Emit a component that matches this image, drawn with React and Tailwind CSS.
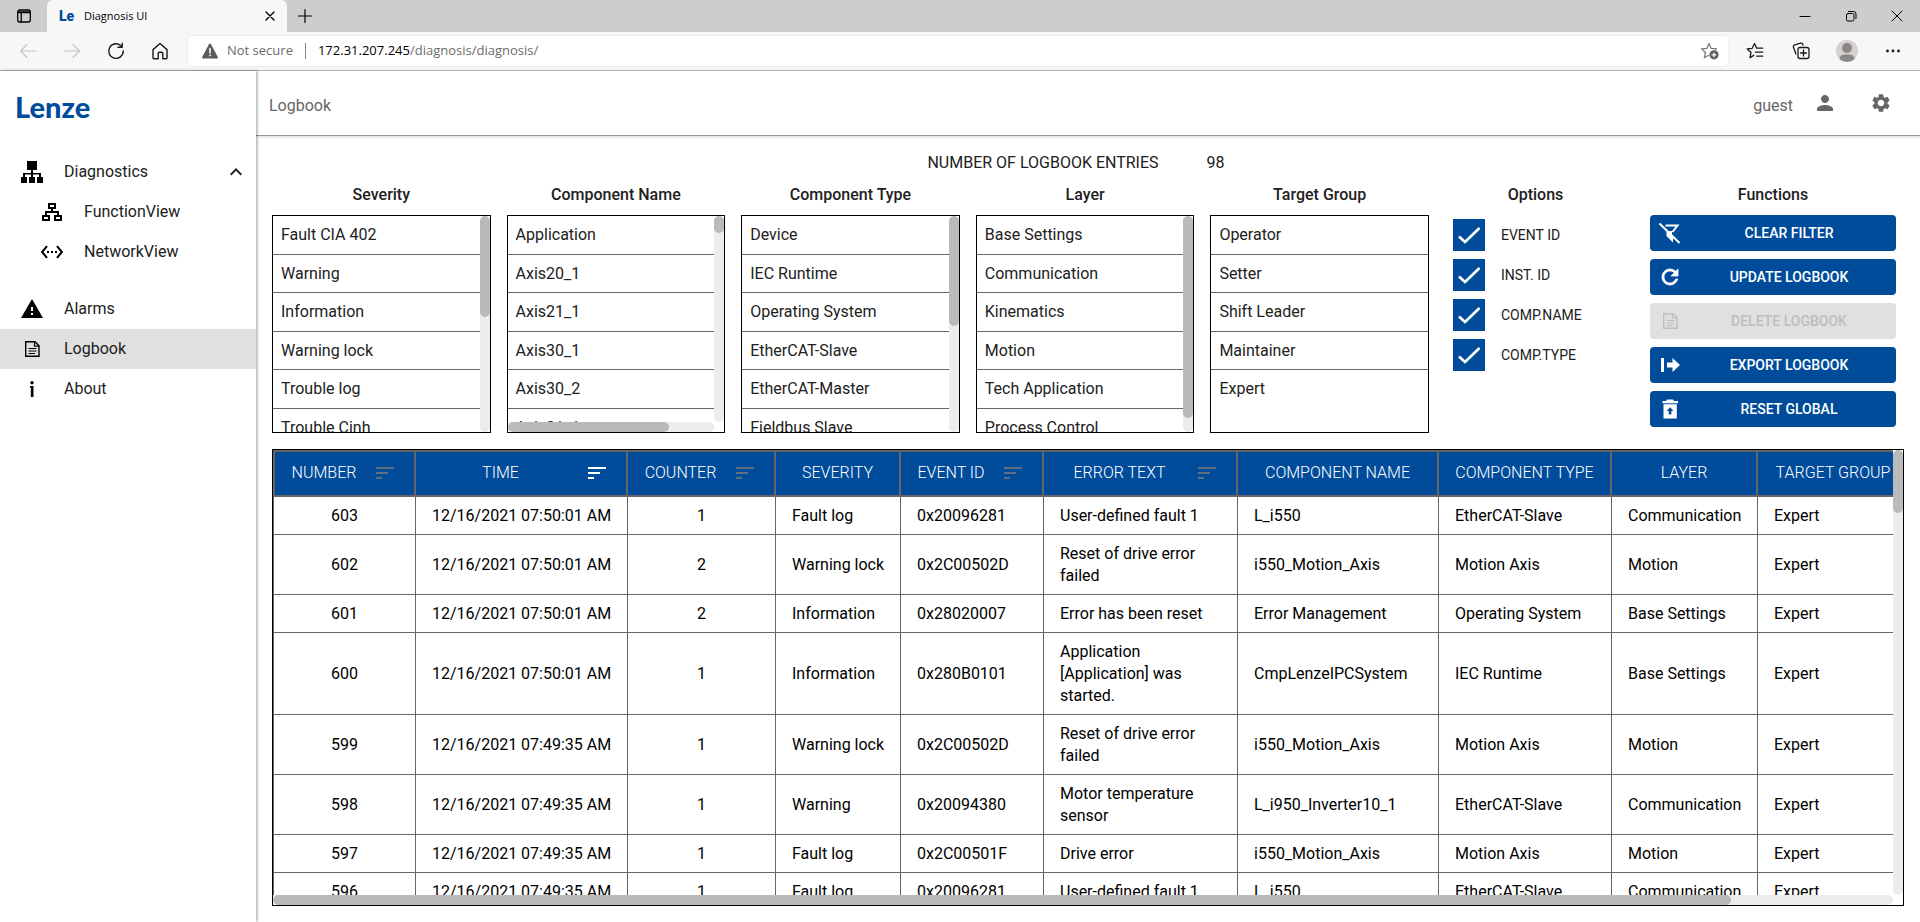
import React from "react";
import {
  MdExpandLess,
  MdPerson,
  MdSettings,
  MdSettingsEthernet,
  MdSort,
  MdWarning,
} from "react-icons/md";

/* ---------- icons ---------- */

function Stroke({ size = 16, width = 1, children, className }) {
  return (
    <svg
      width={size}
      height={size}
      viewBox={`0 0 ${size} ${size}`}
      fill="none"
      stroke="currentColor"
      strokeWidth={width}
      strokeLinecap="round"
      strokeLinejoin="round"
      className={className}
      aria-hidden="true"
    >
      {children}
    </svg>
  );
}

const TabActionsIcon = () => (
  <Stroke size={16} width={1.3}>
    <rect x="1.7" y="2" width="12.6" height="12" rx="2" />
    <path d="M2 3.8h12M2 4.6h12M5.2 5v9" />
  </Stroke>
);
const BackIcon = () => (
  <Stroke size={18} width={1.1}>
    <path d="M17 9H1.5M8 2.5 1.5 9 8 15.5" />
  </Stroke>
);
const ForwardIcon = () => (
  <Stroke size={18} width={1.1}>
    <path d="M1 9h15.500M10 2.5 16.500 9 10 15.500" />
  </Stroke>
);
const ReloadIcon = () => (
  <Stroke size={18} width={1.4}>
    <path d="M16.300 9a7.300 7.300 0 1 1-2-5M15.200 1.200v4h-4.200" />
  </Stroke>
);
const HomeIcon = () => (
  <Stroke size={18} width={1.4}>
    <path d="M2 7.600 9 1.500l7 6.100V16a.700.700 0 0 1-.7.7h-3.500V11.500a1.200 1.200 0 0 0-1.200-1.200H8.400a1.200 1.200 0 0 0-1.200 1.200v5.200H2.700A.7.7 0 0 1 2 16z" />
  </Stroke>
);
const AlertIcon = () => (
  <svg width="18" height="18" viewBox="0 0 18 18" fill="#5c5c5c" aria-hidden="true">
    <path d="M9 1.500c.4 0 .7.200.9.600l6.900 12.800c.4.700-.1 1.600-.9 1.600H2.100c-.8 0-1.300-.9-.9-1.600L8.100 2.100c.2-.4.500-.6.900-.6z" />
    <path d="M9 6.500v4.500" stroke="#fff" strokeWidth="1.500" strokeLinecap="round" />
    <circle cx="9" cy="13.400" r=".9" fill="#fff" />
  </svg>
);
const StarAddIcon = () => (
  <svg width="20" height="18" viewBox="0 0 20 18" aria-hidden="true">
    <path
      d="M9 1.500l2.200 4.900 5.300.5-4 3.600 1.200 5.200L9 13l-4.700 2.700 1.200-5.200-4-3.600 5.300-.5z"
      fill="none"
      stroke="#767676"
      strokeWidth="1.200"
      strokeLinejoin="round"
    />
    <circle cx="14" cy="12.800" r="5.400" fill="#fff" />
    <circle cx="14" cy="12.800" r="4.600" fill="#5f5f5f" />
    <path d="M11.600 12.800h4.800M14 10.400v4.800" stroke="#fff" strokeWidth="1.200" />
  </svg>
);
const FavoritesIcon = () => (
  <Stroke size={18} width={1.3}>
    <path d="M10.700 6.200 8.500 1.500 6.200 6.300 1.200 6.900l3.800 3.500-1 5.200 3.800-2.200M10.700 6.200h6M9.500 10.200h7.200M10.700 14.200h6" />
  </Stroke>
);
const CollectionsIcon = () => (
  <Stroke size={18} width={1.3}>
    <path d="M4 12 1.500 5.400A2 2 0 0 1 2.700 2.800L8.500 1.200a2 2 0 0 1 2.300 1l.3.800" />
    <rect x="6" y="5.500" width="11" height="11" rx="2" />
    <path d="M11.500 8v6M8.500 11h6" />
  </Stroke>
);
const AvatarIcon = () => (
  <svg width="22" height="22" viewBox="0 0 22 22" aria-hidden="true">
    <circle cx="11" cy="11" r="11" fill="#d3d1cf" />
    <circle cx="11" cy="8" r="5" fill="#8a8683" />
    <path d="M3.500 19c0-3.200 2.500-4.500 7.500-4.500s7.500 1.300 7.500 4.500A11 11 0 0 1 11 22a11 11 0 0 1-7.500-3z" fill="#8a8683" />
  </svg>
);
const DotsIcon = () => (
  <svg width="16" height="16" viewBox="0 0 16 16" fill="#1a1a1a" aria-hidden="true">
    <circle cx="2.500" cy="8" r="1.400" />
    <circle cx="8" cy="8" r="1.400" />
    <circle cx="13.500" cy="8" r="1.400" />
  </svg>
);

const SitemapIcon = () => (
  <svg width="22" height="22" viewBox="0 0 22 22" fill="#000" aria-hidden="true">
    <path d="M6 0h10v9H6zM10 9h2v3h-2zM2 12h18v4h-2v-2.500h-6V16h-2v-2.500H4V16H2zM0 16h6v6H0zM8 16h6v6H8zM16 16h6v6h-6z" />
  </svg>
);
const FunctionTreeIcon = () => (
  <svg width="20" height="18" viewBox="0 0 20 18" fill="none" stroke="#000" strokeWidth="2" aria-hidden="true">
    <path d="M7 1h6v4H7zM1 13h6v4H1zM13 13h6v4h-6zM10 5v4M4 13V9h12v4" />
  </svg>
);
const DocumentIcon = ({ className }) => (
  <svg width="24" height="24" viewBox="0 0 24 24" fill="none" stroke="currentColor" className={className} aria-hidden="true">
    <path d="M5.700 4.700h9.300l4 4v10.600H5.700z" strokeWidth="1.400" />
    <path d="M14.500 4.500v4.700h4.700" strokeWidth="1.200" />
    <path d="M8.500 11.500h8M8.500 14h8M8.500 16.500h6.500" strokeWidth="1.200" />
  </svg>
);
const InfoIcon = () => (
  <svg width="24" height="24" viewBox="0 0 24 24" fill="#000" aria-hidden="true">
    <circle cx="12" cy="5.700" r="1.700" />
    <path d="M10 9h3.500v11h-2.700v-9.500H10z" />
  </svg>
);
const FilterOffIcon = () => (
  <svg width="24" height="24" viewBox="0 0 24 24" fill="none" aria-hidden="true">
    <path d="M7.500 4.500h12l-5 6.500M9.500 10.500v4l4.500 4.500v-4" stroke="#fff" strokeWidth="2" />
    <path d="M9 10h5v7l-4.500-2.500z" fill="#fff" />
    <path d="M1.500 2.500l20 19.500" stroke="#fff" strokeWidth="2" />
  </svg>
);
const RefreshIcon = () => (
  <svg width="24" height="24" viewBox="0 0 24 24" fill="#fff" stroke="#fff" strokeWidth=".8" aria-hidden="true">
    <path d="M17.650 6.350C16.200 4.900 14.210 4 12 4c-4.420 0-7.990 3.580-7.990 8s3.570 8 7.990 8c3.730 0 6.840-2.550 7.730-6h-2.080c-.82 2.330-3.040 4-5.650 4-3.310 0-6-2.690-6-6s2.690-6 6-6c1.660 0 3.140.69 4.220 1.780L13 11h7V4l-2.350 2.350z" />
  </svg>
);
const ExportIcon = () => (
  <svg width="24" height="24" viewBox="0 0 24 24" fill="#fff" aria-hidden="true">
    <path d="M3 5h3v14H3zM9 9.500h5.500V5l7.500 7-7.500 7v-4.500H9z" />
  </svg>
);
const RestoreIcon = () => (
  <svg width="24" height="24" viewBox="0 0 24 24" fill="#fff" aria-hidden="true">
    <path d="M9 2.500h6l1 1.500h4v2.200H4.500V4H8z" />
    <path fillRule="evenodd" d="M5.500 7.200h13.300v14.300H5.500zM12.100 10.300l-3.400 3.700h2.100v3.500h2.600V14h2.100z" />
  </svg>
);

/* ---------- browser frame ---------- */

function BrowserFrame() {
  return (
    <div className="shrink-0 font-['Open_Sans','Noto_Sans',sans-serif]">
      <div className="flex h-8 bg-[#cdcdcd] text-black">
        <button aria-label="Tab actions" className="flex w-[47px] items-center justify-center">
          <TabActionsIcon />
        </button>
        <div className="flex w-60 items-center rounded-t-md bg-[#f7f7f7] pl-3 pr-[7px]">
          <span className="w-[25px] font-['Roboto',sans-serif] text-sm font-black text-[#004c9b]" aria-hidden="true">Le</span>
          <span className="flex-1 text-[11px]">Diagnosis UI</span>
          <button aria-label="Close tab" className="flex h-5 w-5 items-center justify-center">
            <Stroke size={10} width={1.4}><path d="M1 1l8 8M9 1 1 9" /></Stroke>
          </button>
        </div>
        <button aria-label="New tab" className="flex w-9 items-center justify-center">
          <Stroke size={16} width={1.2}><path d="M8 1.500v13M1.500 8h13" /></Stroke>
        </button>
        <div className="ml-auto flex">
          <button aria-label="Minimize" className="flex w-[46px] items-center justify-center">
            <Stroke size={12}><path d="M1 6.500h10" /></Stroke>
          </button>
          <button aria-label="Restore" className="flex w-[46px] items-center justify-center">
            <Stroke size={12}>
              <rect x="1.500" y="3.500" width="7.500" height="7.500" rx="1.500" />
              <path d="M3.500 1.500h5a2.500 2.500 0 0 1 2.500 2.500v4.500" />
            </Stroke>
          </button>
          <button aria-label="Close window" className="flex w-[46px] items-center justify-center">
            <Stroke size={12}><path d="M1 1l10 10M11 1 1 11" /></Stroke>
          </button>
        </div>
      </div>

      <div className="flex h-[39px] items-center border-b border-[#b9b9b9] bg-[#f7f7f7] pl-1.5 pr-1 text-[#1a1a1a]">
        <button aria-label="Back" className="flex w-11 justify-center text-[#c4c4c4]"><BackIcon /></button>
        <button aria-label="Forward" className="flex w-11 justify-center text-[#c4c4c4]"><ForwardIcon /></button>
        <button aria-label="Reload" className="flex w-11 justify-center"><ReloadIcon /></button>
        <button aria-label="Home" className="flex w-11 justify-center"><HomeIcon /></button>
        <div className="ml-1.5 flex h-[30px] flex-1 items-center rounded bg-white pl-[13px] pr-2 text-[13px] shadow-[0_0_2px_rgba(0,0,0,0.12)]">
          <AlertIcon />
          <span className="pl-2 text-[#6b6b6b]">Not secure</span>
          <span className="mx-3 h-4 w-px bg-[#8a8a8a]" />
          <span className="flex-1 text-[#6b6b6b]">
            <span className="text-black">172.31.207.245</span>/diagnosis/diagnosis/
          </span>
          <button aria-label="Add to favorites"><StarAddIcon /></button>
        </div>
        <div className="ml-1 flex">
          <button aria-label="Favorites" className="flex w-[46px] items-center justify-center"><FavoritesIcon /></button>
          <button aria-label="Collections" className="flex w-[46px] items-center justify-center"><CollectionsIcon /></button>
          <button aria-label="Profile" className="flex w-[46px] items-center justify-center"><AvatarIcon /></button>
          <button aria-label="Settings and more" className="flex w-[46px] items-center justify-center"><DotsIcon /></button>
        </div>
      </div>
    </div>
  );
}

/* ---------- sidebar ---------- */

function NavItem({ icon, label, sub, active, trailing }) {
  return (
    <a
      href="#"
      aria-current={active ? "page" : undefined}
      className={`flex h-10 items-center pr-2 ${sub ? "pl-9" : "pl-4"} ${active ? "bg-[#e0e0e0]" : ""}`}
    >
      <span className="flex w-12 shrink-0 items-center pl-1">
        <span className="flex w-6 justify-center text-black">{icon}</span>
      </span>
      <span className="flex-1">{label}</span>
      {trailing}
    </a>
  );
}

function Sidebar() {
  return (
    <aside className="z-10 w-64 shrink-0 bg-white shadow-[1px_0_3px_rgba(0,0,0,0.4)]">
      <div className="flex h-[81px] items-center pb-2.5 pl-[15px]">
        <a href="#" className="font-['Lato',sans-serif] text-[29px] leading-none font-black text-[#004c9b]">
          Lenze
        </a>
      </div>
      <nav>
        <NavItem icon={<SitemapIcon />} label="Diagnostics" trailing={<MdExpandLess size={24} />} />
        <NavItem sub icon={<FunctionTreeIcon />} label="FunctionView" />
        <NavItem sub icon={<MdSettingsEthernet size={24} />} label="NetworkView" />
        <div className="h-[17px]" />
        <NavItem icon={<MdWarning size={24} />} label="Alarms" />
        <NavItem icon={<DocumentIcon />} label="Logbook" active />
        <NavItem icon={<InfoIcon />} label="About" />
      </nav>
    </aside>
  );
}

/* ---------- filter lists ---------- */

const FILTERS = [
  { title: "Severity", thumb: 101, items: ["Fault CIA 402", "Warning", "Information", "Warning lock", "Trouble log", "Trouble Cinh"] },
  { title: "Component Name", thumb: 17, horizontal: true, items: ["Application", "Axis20_1", "Axis21_1", "Axis30_1", "Axis30_2", "Axis31_1"] },
  { title: "Component Type", thumb: 110, items: ["Device", "IEC Runtime", "Operating System", "EtherCAT-Slave", "EtherCAT-Master", "Fieldbus Slave"] },
  { title: "Layer", thumb: 202, items: ["Base Settings", "Communication", "Kinematics", "Motion", "Tech Application", "Process Control"] },
  { title: "Target Group", items: ["Operator", "Setter", "Shift Leader", "Maintainer", "Expert"] },
];

function VerticalBar({ thumb }) {
  return (
    <div className="w-[10px] shrink-0 rounded-full bg-[#ececec]">
      <div className="rounded-full bg-[#bababa]" style={{ height: thumb }} />
    </div>
  );
}

function FilterList({ title, items, thumb, horizontal }) {
  return (
    <section className="min-w-0 flex-1">
      <h2 className="pb-2 text-center leading-6 font-medium">{title}</h2>
      <div className="flex h-[218px] flex-col border border-black">
        <div className="flex min-h-0 flex-1">
          <div className="min-w-0 flex-1 overflow-y-auto [scrollbar-width:none]">
            <ul className="grid h-[231px] grid-rows-6">
              {items.map((item, i) => (
                <li
                  key={item}
                  className={`flex items-center border-b pt-px pl-2 ${i < items.length - 1 || items.length > 5 ? "border-[#666]" : "border-transparent"}`}
                >
                  {item}
                </li>
              ))}
            </ul>
          </div>
          {thumb && <VerticalBar thumb={thumb} />}
        </div>
        {horizontal && (
          <div className="mr-[10px] h-[10px] shrink-0 rounded-full bg-[#ececec]">
            <div className="h-full w-[78%] rounded-full bg-[#bababa]" />
          </div>
        )}
      </div>
    </section>
  );
}

/* ---------- options and functions ---------- */

function Options() {
  return (
    <section className="ml-6 w-[165px] shrink-0">
      <h2 className="pb-2 text-center leading-6 font-medium">Options</h2>
      <div className="flex flex-col gap-2 pt-1">
        {["EVENT ID", "INST. ID", "COMP.NAME", "COMP.TYPE"].map((label) => (
          <label key={label} className="flex items-center gap-4 text-sm">
            <span className="grid h-8 w-8">
              <input
                type="checkbox"
                defaultChecked
                className="peer col-start-1 row-start-1 appearance-none border border-[#004c9b] bg-white checked:bg-[#004c9b]"
              />
              <svg
                viewBox="0 0 32 32"
                className="pointer-events-none invisible col-start-1 row-start-1 peer-checked:visible"
                fill="none"
                stroke="#fff"
                strokeWidth="2.700"
                aria-hidden="true"
              >
                <path d="M6 17.500l6 5.500L26.500 9" />
              </svg>
            </span>
            {label}
          </label>
        ))}
      </div>
    </section>
  );
}

const ACTIONS = [
  { label: "CLEAR FILTER", icon: <FilterOffIcon /> },
  { label: "UPDATE LOGBOOK", icon: <RefreshIcon /> },
  { label: "DELETE LOGBOOK", icon: <DocumentIcon />, disabled: true },
  { label: "EXPORT LOGBOOK", icon: <ExportIcon /> },
  { label: "RESET GLOBAL", icon: <RestoreIcon /> },
];

function Functions() {
  return (
    <section className="mr-2 ml-8 w-[246px] shrink-0">
      <h2 className="pb-2 text-center leading-6 font-medium">Functions</h2>
      <div className="flex flex-col gap-2">
        {ACTIONS.map(({ label, icon, disabled }) => (
          <button
            key={label}
            disabled={disabled}
            className="flex h-9 items-center rounded bg-[#004c9b] pl-2 text-sm font-medium text-white disabled:bg-[#e0e0e0] disabled:text-[#bdbdbd]"
          >
            {icon}
            <span className="flex-1 text-center">{label}</span>
          </button>
        ))}
      </div>
    </section>
  );
}

/* ---------- logbook table ---------- */

const COLUMNS = [
  { label: "NUMBER", width: "w-[143px]", sort: "idle", cell: "text-center whitespace-nowrap" },
  { label: "TIME", width: "w-[212px]", sort: "active", cell: "text-center whitespace-nowrap" },
  { label: "COUNTER", width: "w-[148px]", sort: "idle", cell: "text-center whitespace-nowrap" },
  { label: "SEVERITY", width: "w-[125px]", cell: "whitespace-nowrap" },
  { label: "EVENT ID", width: "w-[143px]", sort: "idle", cell: "whitespace-nowrap" },
  { label: "ERROR TEXT", width: "w-[194px]", sort: "idle", cell: "" },
  { label: "COMPONENT NAME", width: "w-[201px]", cell: "whitespace-nowrap" },
  { label: "COMPONENT TYPE", width: "w-[173px]", cell: "whitespace-nowrap" },
  { label: "LAYER", width: "w-[146px]", cell: "whitespace-nowrap" },
  { label: "TARGET GROUP", width: "w-[152px]", cell: "whitespace-nowrap" },
];

const ROWS = [
  ["603", "12/16/2021 07:50:01 AM", "1", "Fault log", "0x20096281", "User-defined fault 1", "L_i550", "EtherCAT-Slave", "Communication", "Expert"],
  ["602", "12/16/2021 07:50:01 AM", "2", "Warning lock", "0x2C00502D", "Reset of drive error failed", "i550_Motion_Axis", "Motion Axis", "Motion", "Expert"],
  ["601", "12/16/2021 07:50:01 AM", "2", "Information", "0x28020007", "Error has been reset", "Error Management", "Operating System", "Base Settings", "Expert"],
  ["600", "12/16/2021 07:50:01 AM", "1", "Information", "0x280B0101", "Application [Application] was started.", "CmpLenzeIPCSystem", "IEC Runtime", "Base Settings", "Expert"],
  ["599", "12/16/2021 07:49:35 AM", "1", "Warning lock", "0x2C00502D", "Reset of drive error failed", "i550_Motion_Axis", "Motion Axis", "Motion", "Expert"],
  ["598", "12/16/2021 07:49:35 AM", "1", "Warning", "0x20094380", "Motor temperature sensor", "L_i950_Inverter10_1", "EtherCAT-Slave", "Communication", "Expert"],
  ["597", "12/16/2021 07:49:35 AM", "1", "Fault log", "0x2C00501F", "Drive error", "i550_Motion_Axis", "Motion Axis", "Motion", "Expert"],
  ["596", "12/16/2021 07:49:35 AM", "1", "Fault log", "0x20096281", "User-defined fault 1", "L_i550", "EtherCAT-Slave", "Communication", "Expert"],
];

function LogTable() {
  return (
    <div className="mt-4 flex min-h-0 flex-1 flex-col border border-black">
      <div className="flex min-h-0 flex-1">
        <div className="min-w-0 flex-1 overflow-auto [scrollbar-width:none]">
          <table className="w-full min-w-[1637px] table-fixed border-separate border-spacing-0 leading-[22px] text-black">
            <colgroup>
              {COLUMNS.map((c) => (
                <col key={c.label} className={c.width} />
              ))}
            </colgroup>
            <thead className="sticky top-0">
              <tr>
                {COLUMNS.map((c, i) => (
                  <th
                    key={c.label}
                    scope="col"
                    className={`h-[47px] border-y-2 border-r-2 border-[#666] bg-[#004c9b] p-0 pb-px font-light whitespace-nowrap text-white ${i === 0 ? "border-l-2" : ""}`}
                  >
                    {c.sort ? (
                      <div className="flex items-center pr-[17px]">
                        <span className="flex-1">{c.label}</span>
                        <button
                          aria-label={`Sort by ${c.label}`}
                          className={c.sort === "active" ? "text-white" : "text-[#5f6f82]"}
                        >
                          <MdSort size={24} />
                        </button>
                      </div>
                    ) : (
                      c.label
                    )}
                  </th>
                ))}
              </tr>
            </thead>
            <tbody>
              {ROWS.map((row) => (
                <tr key={row[0]}>
                  {row.map((cell, i) => (
                    <td
                      key={COLUMNS[i].label}
                      className={`border-r border-b border-[#666] px-4 pt-2 pb-[7px] align-middle ${COLUMNS[i].cell} ${i === 0 ? "border-l" : ""}`}
                    >
                      {cell}
                    </td>
                  ))}
                </tr>
              ))}
            </tbody>
          </table>
        </div>
        <VerticalBar thumb={63} />
      </div>
      <div className="mr-[10px] h-[10px] shrink-0 rounded-full bg-[#ececec]">
        <div className="h-full w-[90%] rounded-full bg-[#bababa]" />
      </div>
    </div>
  );
}

/* ---------- page ---------- */

export default function App() {
  return (
    <div className="flex h-screen flex-col bg-white font-['Roboto',sans-serif] text-base text-[#212121]">
      <BrowserFrame />
      <div className="flex min-h-0 flex-1">
        <Sidebar />
        <div className="flex min-w-0 flex-1 flex-col">
          <header className="flex h-[65px] shrink-0 items-center border-b border-[#999] pr-7 pl-3 text-[#666] shadow-[0_1px_3px_rgba(0,0,0,0.15)]">
            <h1 className="flex-1 pt-1.5 pl-px">Logbook</h1>
            <span className="mr-5 pt-1.5">guest</span>
            <button aria-label="User" className="mr-[33px]"><MdPerson size={24} /></button>
            <button aria-label="Settings"><MdSettings size={22} /></button>
          </header>
          <main className="flex min-h-0 flex-1 flex-col px-4 pt-4 pb-4">
            <div className="flex justify-center gap-12 pb-[9px] leading-[22px]">
              <span>NUMBER OF LOGBOOK ENTRIES</span>
              <span className="pr-6">98</span>
            </div>
            <div className="flex shrink-0">
              <div className="flex min-w-0 flex-1 gap-4">
                {FILTERS.map((f) => (
                  <FilterList key={f.title} {...f} />
                ))}
              </div>
              <Options />
              <Functions />
            </div>
            <LogTable />
          </main>
        </div>
      </div>
    </div>
  );
}
